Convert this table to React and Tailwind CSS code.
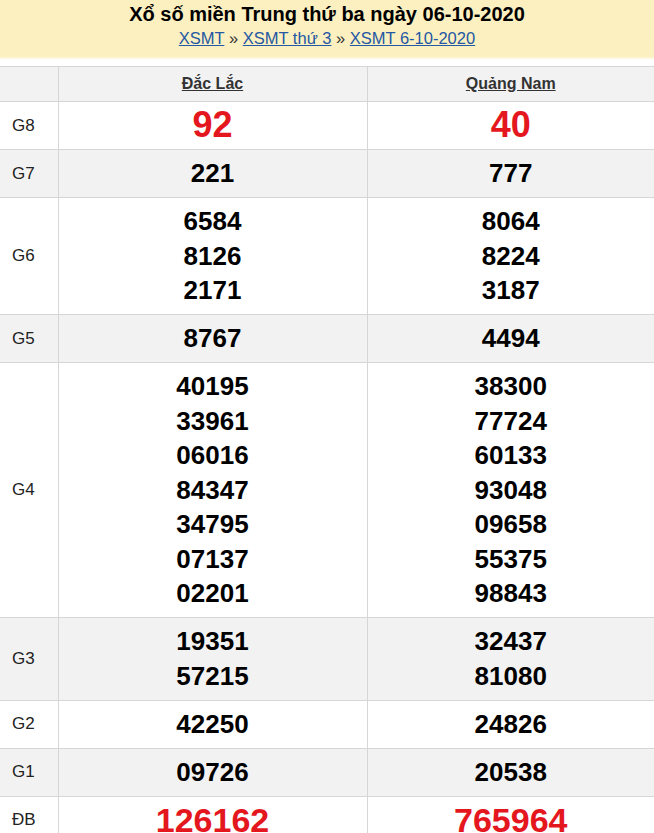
import React from "react";

const ROWS = [
  { label: "G8", a: ["92"], b: ["40"], red: "text-[36px]" },
  { label: "G7", a: ["221"], b: ["777"], gray: true },
  { label: "G6", a: ["6584", "8126", "2171"], b: ["8064", "8224", "3187"] },
  { label: "G5", a: ["8767"], b: ["4494"], gray: true },
  {
    label: "G4",
    a: ["40195", "33961", "06016", "84347", "34795", "07137", "02201"],
    b: ["38300", "77724", "60133", "93048", "09658", "55375", "98843"],
  },
  { label: "G3", a: ["19351", "57215"], b: ["32437", "81080"], gray: true },
  { label: "G2", a: ["42250"], b: ["24826"] },
  { label: "G1", a: ["09726"], b: ["20538"], gray: true },
  { label: "ĐB", a: ["126162"], b: ["765964"], red: "text-[34px]" },
];

function Nums({ nums, red, divider }) {
  return (
    <td
      className={`pt-[6.25px] pb-[6.25px] text-center align-middle ${
        divider ? "border-x border-[#d6d6d6]" : ""
      }`}
    >
      {nums.map((n) => (
        <div
          key={n}
          className={
            red
              ? `${red} font-bold leading-[34.5px] text-[#e4161e]`
              : "text-[26px] font-bold leading-[34.5px] text-black"
          }
        >
          {n}
        </div>
      ))}
    </td>
  );
}

export default function App() {
  return (
    <div className="w-[654px] bg-white" style={{ fontFamily: '"Liberation Sans", Arial, sans-serif' }}>
      {/* Title band */}
      <div className="h-[60px] bg-gradient-to-b from-[#fcf0c0] from-[94%] to-white pt-[2px] text-center">
        <h1 className="text-[20px] font-bold leading-[25px] text-black">
          Xổ số miền Trung thứ ba ngày 06-10-2020
        </h1>
        <div className="text-[16.5px] leading-[22px] text-[#333]">
          <a href="#" className="text-[#2457a4] underline">XSMT</a>
          <span> » </span>
          <a href="#" className="text-[#2457a4] underline">XSMT thứ 3</a>
          <span> » </span>
          <a href="#" className="text-[#2457a4] underline">XSMT 6-10-2020</a>
        </div>
      </div>

      <table className="mt-[6px] w-full border-collapse">
        <colgroup>
          <col className="w-[58px]" />
          <col className="w-[309px]" />
          <col />
        </colgroup>
        <thead>
          <tr className="bg-[#f2f2f2]">
            <th className="h-[35px] border border-l-0 border-[#d6d6d6]"></th>
            <th className="border border-[#d6d6d6] text-[16px] font-bold text-[#333]">
              <a href="#" className="underline">Đắc Lắc</a>
            </th>
            <th className="border border-r-0 border-[#d6d6d6] text-[16px] font-bold text-[#333]">
              <a href="#" className="underline">Quảng Nam</a>
            </th>
          </tr>
        </thead>
        <tbody>
          {ROWS.map((r) => (
            <tr key={r.label} className={`border-b border-[#d6d6d6] ${r.gray ? "bg-[#f2f2f2]" : "bg-white"}`}>
              <td className="pl-[12px] text-[17px] text-[#222] align-middle">{r.label}</td>
              <Nums nums={r.a} red={r.red} divider />
              <Nums nums={r.b} red={r.red} />
            </tr>
          ))}
        </tbody>
      </table>
    </div>
  );
}
